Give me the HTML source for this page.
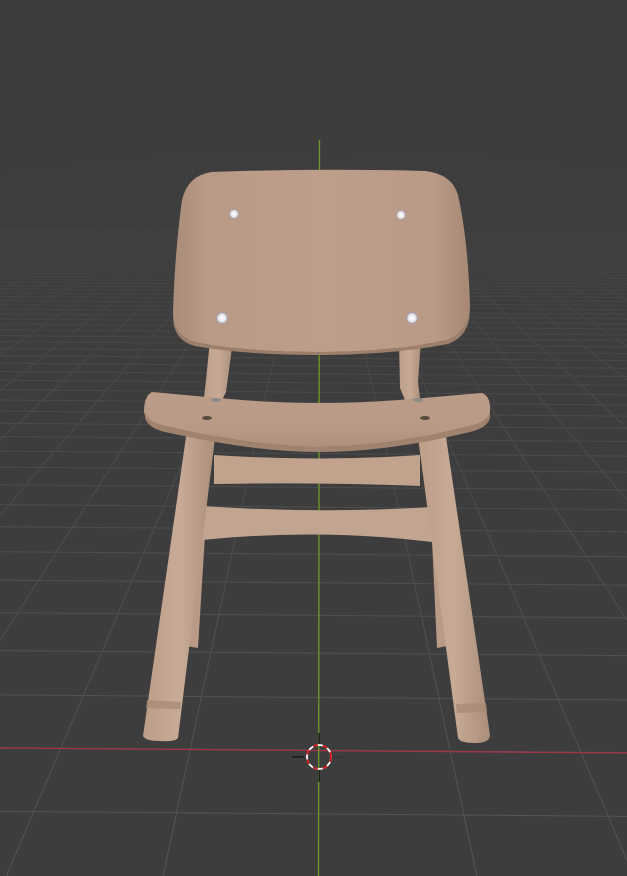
<!DOCTYPE html>
<html><head><meta charset="utf-8"><style>
html,body{margin:0;padding:0;background:#3d3d3d;overflow:hidden}
svg{display:block}
</style></head><body>
<svg id="s" width="627" height="876" viewBox="0 0 627 876" xmlns="http://www.w3.org/2000/svg">
<defs>
<linearGradient id="fade" gradientUnits="userSpaceOnUse" x1="0" y1="150" x2="0" y2="876">
<stop offset="0" stop-color="#3d3d3d"/>
<stop offset="0.12" stop-color="#414141"/>
<stop offset="0.35" stop-color="#4a4a4a"/>
<stop offset="1" stop-color="#555"/>
</linearGradient>
<linearGradient id="wood" x1="0" y1="0" x2="1" y2="0">
<stop offset="0" stop-color="#a98c79"/>
<stop offset="0.12" stop-color="#b99a86"/>
<stop offset="0.5" stop-color="#bd9e8a"/>
<stop offset="0.88" stop-color="#b99a86"/>
<stop offset="1" stop-color="#a68874"/>
</linearGradient>
<linearGradient id="leg" x1="0" y1="0" x2="1" y2="0">
<stop offset="0" stop-color="#bb9d88"/>
<stop offset="0.5" stop-color="#c8ab96"/>
<stop offset="1" stop-color="#ab8e7a"/>
</linearGradient>
<linearGradient id="seatg" x1="0" y1="0" x2="0" y2="1">
<stop offset="0" stop-color="#bb9c88"/>
<stop offset="0.7" stop-color="#b89985"/>
<stop offset="1" stop-color="#ad8f7b"/>
</linearGradient>
<radialGradient id="dot"><stop offset="0" stop-color="#fff"/><stop offset="0.6" stop-color="#e8e8ee"/><stop offset="1" stop-color="#9b8f9a"/></radialGradient>
</defs>
<g id="grid" stroke="url(#fade)" stroke-width="1" fill="none"></g>
<line x1="0" y1="748" x2="627" y2="753" stroke="#a23447" stroke-width="1.3"/>
<line x1="319.5" y1="140" x2="318.5" y2="876" stroke="#6d9a2a" stroke-width="1.3"/>

<path d="M196,455 L210,455 L198,648 L186,646 Z" fill="#b89a86"/>
<path d="M428,455 L440,455 L447,646 L437,648 Z" fill="#b89a86"/>
<path d="M210,340 L233,340 L226,392 L222,400 L204,398 L206,380 Z" fill="url(#leg)"/>
<path d="M399,340 L421,340 L418,382 L420,398 L405,400 L400,388 Z" fill="url(#leg)"/>
<path d="M214,455 Q320,462 420,455 L420,486 Q320,482 214,484 Z" fill="#c0a28d"/>
<path d="M202,506 Q320,514 432,507 L432,542 Q320,528 202,540 Z" fill="#c2a590"/>
<path d="M187,430 L216,430 L178,738 Q175,742 160,741 Q145,741 143,736 Z" fill="url(#leg)"/>
<path d="M417,430 L445,430 L490,735 Q490,743 475,743 Q460,743 458,738 Z" fill="url(#leg)"/>
<path d="M147,700 L181,702 L180,709 L146,708 Z" fill="#a98c78" opacity="0.8"/>
<path d="M456,704 L486,703 L487,712 L457,713 Z" fill="#a98c78" opacity="0.8"/>
<path d="M152,392 C220,398 260,403 320,403 C380,403 420,398 482,393 Q491,396 490,412 Q488,422 470,426 C420,438 370,447 320,447 C270,447 220,438 165,426 Q146,422 144,412 Q144,396 152,392 Z" fill="url(#seatg)"/>
<path d="M145,412 Q148,422 165,426 C220,438 270,447 320,447 C370,447 420,438 470,426 Q487,422 490,412 L490,418 Q487,428 470,432 C420,444 370,452 320,452 C270,452 220,444 165,432 Q148,428 145,418 Z" fill="#a0836f"/>
<ellipse cx="216" cy="400" rx="5" ry="2" fill="#8d8a8a"/><ellipse cx="418" cy="400" rx="5" ry="2" fill="#8d8a8a"/>
<ellipse cx="207" cy="418" rx="5" ry="2" fill="#5a4a3e"/><ellipse cx="425" cy="418" rx="5" ry="2" fill="#5a4a3e"/>
<path d="M212,172 Q320,168 425,171 Q452,174 458,195 Q468,240 470,305 Q470,330 448,340 Q390,352 320,352 Q245,352 195,342 Q173,336 173,312 Q175,250 182,200 Q188,175 212,172 Z" fill="url(#wood)"/>
<path d="M173,312 Q173,336 195,342 Q245,352 320,352 Q390,352 448,340 Q470,330 470,305 L470,309 Q470,336 448,344 Q390,355 320,355 Q245,355 195,346 Q172,340 173,314 Z" fill="#9c7f6b"/>
<circle cx="234" cy="214" r="5" fill="url(#dot)"/>
<circle cx="401" cy="215" r="5" fill="url(#dot)"/>
<circle cx="222" cy="318" r="6" fill="url(#dot)"/>
<circle cx="412" cy="318" r="6" fill="url(#dot)"/>
<line x1="292" y1="757" x2="304" y2="757" stroke="#111" stroke-width="1.2"/>
<line x1="333" y1="757" x2="345" y2="757" stroke="#333" stroke-width="1.2"/>
<line x1="319" y1="733" x2="319" y2="745" stroke="#111" stroke-width="1.2"/>
<line x1="319" y1="769" x2="319" y2="782" stroke="#111" stroke-width="1.2"/>
<circle cx="319" cy="757" r="12" fill="none" stroke="#fff" stroke-width="1.8"/>
<circle cx="319" cy="757" r="12" fill="none" stroke="#d01818" stroke-width="1.8" stroke-dasharray="5 5"/>
</svg>
<script>
var g=document.getElementById('grid'),H=140,s='';
for(var m=-3;m<=60;m++){var v=0.001639+m*0.000155;if(v<=0)continue;var y=H+1/v;if(y>876)continue;s+='<line x1="0" y1="'+(y-2.5)+'" x2="627" y2="'+(y+2.5)+'"/>';}
for(var j=-40;j<=40;j++){if(j==0)continue;var xb=320+j*130*(876-H)/610;s+='<line x1="320" y1="'+H+'" x2="'+xb+'" y2="876"/>';}
g.innerHTML=s;
</script>
</body></html>
